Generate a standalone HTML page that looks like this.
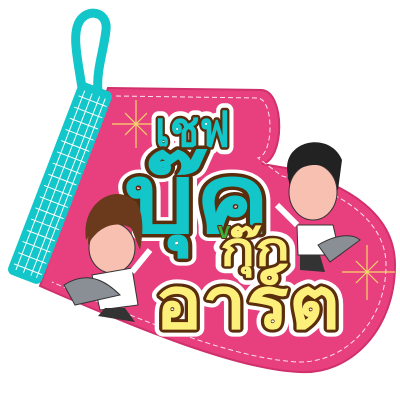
<!DOCTYPE html>
<html><head><meta charset="utf-8"><style>
html,body{margin:0;padding:0;background:#fff;width:400px;height:400px;overflow:hidden}
svg{display:block}
.t{font-family:"Liberation Sans","DejaVu Sans",sans-serif;font-weight:bold;paint-order:stroke;stroke-linejoin:round}
</style></head><body>
<svg width="400" height="400" viewBox="0 0 400 400">
<path d="M82,88 C78,60 70,30 82,18 C92,8 108,14 106,30 C104,50 96,70 98,92" fill="none" stroke="#12c6c9" stroke-width="9" stroke-linecap="round"/>
<path d="M108,88 L262,90 C285,92 285,160 262,164 L286,168 C350,185 395,215 395,265 C395,330 350,375 300,372 C240,370 140,330 40,286 Z" fill="#e8407f" stroke="#d0306c" stroke-width="2"/>
<path d="M116,96 L258,98 C274,100 274,154 258,158 L282,176 C340,190 386,220 386,265 C386,322 345,362 300,362 C240,360 150,325 52,282" fill="none" stroke="#fff" stroke-width="1" stroke-dasharray="5,3" opacity=".85"/>
<g transform="rotate(21 60 183)">
<rect x="42" y="80" width="36" height="206" rx="6" fill="#12c6c9"/>
<g stroke="#fff" stroke-width="1" fill="none">
<path d="M50,88V280M58,88V280M66,88V280M72,88V280"/>
<path d="M46,95H76M46,107H76M46,119H76M46,131H76M46,143H76M46,155H76M46,167H76M46,179H76M46,191H76M46,203H76M46,215H76M46,227H76M46,239H76M46,251H76M46,263H76M46,275H76"/>
</g></g>
<g stroke="#f5d66a" stroke-width="1.2">
<path d="M112,124H160M136,100V148M125,113L147,135M147,113L125,135"/>
<path d="M342,272H395M367,245V300M356,261L378,283M378,261L356,283"/>
</g>
<g stroke="#fff" stroke-width="14" fill="#fff" class="t">
<text class="t" x="155" y="146" font-size="48" textLength="75" lengthAdjust="spacingAndGlyphs">เชฟ</text>
<text class="t" x="124" y="232" font-size="96" textLength="146" lengthAdjust="spacingAndGlyphs">บุ๊ค</text>
<text class="t" x="220" y="265" font-size="46" textLength="70" lengthAdjust="spacingAndGlyphs">กุ๊ก</text>
<text class="t" x="155" y="328" font-size="72" textLength="185" lengthAdjust="spacingAndGlyphs">อาร์ต</text>
</g>
<text class="t" x="155" y="146" font-size="48" textLength="75" lengthAdjust="spacingAndGlyphs" fill="#12c6c9" stroke="#5a2d0c" stroke-width="5">เชฟ</text>
<text class="t" x="124" y="232" font-size="96" textLength="146" lengthAdjust="spacingAndGlyphs" fill="#12c6c9" stroke="#5a2d0c" stroke-width="7">บุ๊ค</text>
<text class="t" x="218" y="238" font-size="22" fill="#3cb23c" stroke="#5a2d0c" stroke-width="2">vs</text>
<text class="t" x="220" y="265" font-size="46" textLength="70" lengthAdjust="spacingAndGlyphs" fill="#fdf07a" stroke="#5a2d0c" stroke-width="5">กุ๊ก</text>
<text class="t" x="155" y="328" font-size="72" textLength="185" lengthAdjust="spacingAndGlyphs" fill="#fdf07a" stroke="#5a2d0c" stroke-width="6">อาร์ต</text>
<!-- left chef -->
<g>
<path d="M86,240 C80,200 120,180 138,205 C145,220 142,240 140,250 L130,225 L95,228 Z" fill="#6b3a1c"/>
<ellipse cx="112" cy="248" rx="23" ry="25" fill="#f7c0b0" stroke="#333" stroke-width="1"/>
<path d="M88,245 C86,210 135,200 139,235 C125,218 100,222 88,245Z" fill="#6b3a1c"/>
<path d="M92,275 L132,268 L138,305 L100,310Z" fill="#fff" stroke="#333" stroke-width="1"/>
<path d="M64,285 C90,268 110,285 120,295 L75,305 Z" fill="#8a8f96" stroke="#333"/>
<path d="M105,308 L125,308 L135,322 L98,316Z" fill="#333"/>
<path d="M132,272 L150,250" stroke="#fff" stroke-width="6"/>
</g>
<!-- right chef -->
<g>
<path d="M288,175 C280,140 330,130 342,160 L338,190 L290,190 Z" fill="#222"/>
<ellipse cx="313" cy="192" rx="24" ry="28" fill="#f7c0b0" stroke="#333" stroke-width="1"/>
<path d="M288,180 C284,145 340,140 339,180 C330,160 300,160 288,180Z" fill="#222"/>
<path d="M297,225 L333,225 L340,255 L298,255Z" fill="#fff" stroke="#333" stroke-width="1"/>
<path d="M318,245 C340,232 355,235 360,240 L330,262 Z" fill="#8a8f96" stroke="#333"/>
<path d="M300,255 L320,255 L325,272 L300,270Z" fill="#333"/>
<path d="M297,225 L277,205" stroke="#fff" stroke-width="6"/>
</g>
</svg>
</body></html>
